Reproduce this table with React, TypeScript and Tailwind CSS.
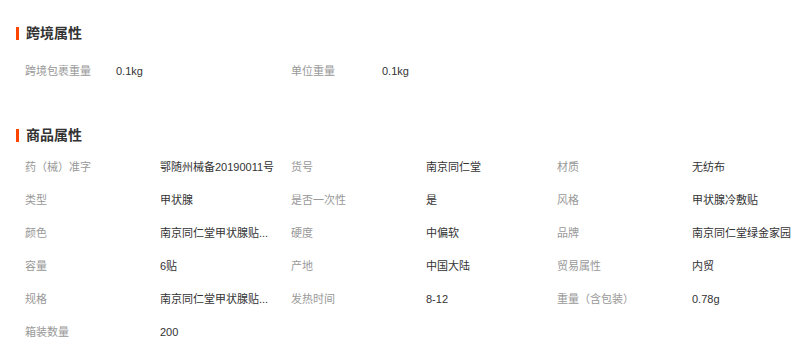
import React from 'react';

const CROSS_BORDER = [
  { label: '跨境包裹重量', value: '0.1kg' },
  { label: '单位重量', value: '0.1kg' },
];

const GOODS = [
  { label: '药（械）准字', value: '鄂随州械备20190011号' },
  { label: '货号', value: '南京同仁堂' },
  { label: '材质', value: '无纺布' },
  { label: '类型', value: '甲状腺' },
  { label: '是否一次性', value: '是' },
  { label: '风格', value: '甲状腺冷敷贴' },
  { label: '颜色', value: '南京同仁堂甲状腺贴...' },
  { label: '硬度', value: '中偏软' },
  { label: '品牌', value: '南京同仁堂绿金家园' },
  { label: '容量', value: '6贴' },
  { label: '产地', value: '中国大陆' },
  { label: '贸易属性', value: '内贸' },
  { label: '规格', value: '南京同仁堂甲状腺贴...' },
  { label: '发热时间', value: '8-12' },
  { label: '重量（含包装）', value: '0.78g' },
  { label: '箱装数量', value: '200' },
];

const SectionTitle: React.FC<{ title: string }> = ({ title }) => (
  <div className="flex items-center h-5 gap-[7px]">
    <span className="w-[3px] h-[13px] bg-[#ff4400]" />
    <h2 className="text-[14px] font-bold text-[#333] leading-5">{title}</h2>
  </div>
);

export default function App() {
  return (
    <div
      className="w-[812px] h-[348px] bg-white pl-4 pt-[23px] text-[11px]"
      style={{ fontFamily: '"Liberation Sans", "Noto Sans CJK SC", sans-serif' }}
    >
      <SectionTitle title="跨境属性" />
      <div className="mt-[18px] ml-[9px] flex h-5 items-center">
        {CROSS_BORDER.map(item => (
          <div key={item.label} className="flex w-[266px] items-center">
            <span className="w-[91px] text-[#999]">{item.label}</span>
            <span className="text-[#333]">{item.value}</span>
          </div>
        ))}
      </div>

      <div className="mt-[44px]">
        <SectionTitle title="商品属性" />
      </div>
      <div className="mt-[6px] ml-[9px] grid grid-cols-[266px_266px_266px]">
        {GOODS.map(item => (
          <div key={item.label} className="flex h-[33px] items-center">
            <span className="w-[135px] shrink-0 text-[#999] whitespace-nowrap">{item.label}</span>
            <span className="whitespace-nowrap text-[#333]">{item.value}</span>
          </div>
        ))}
      </div>
    </div>
  );
}
